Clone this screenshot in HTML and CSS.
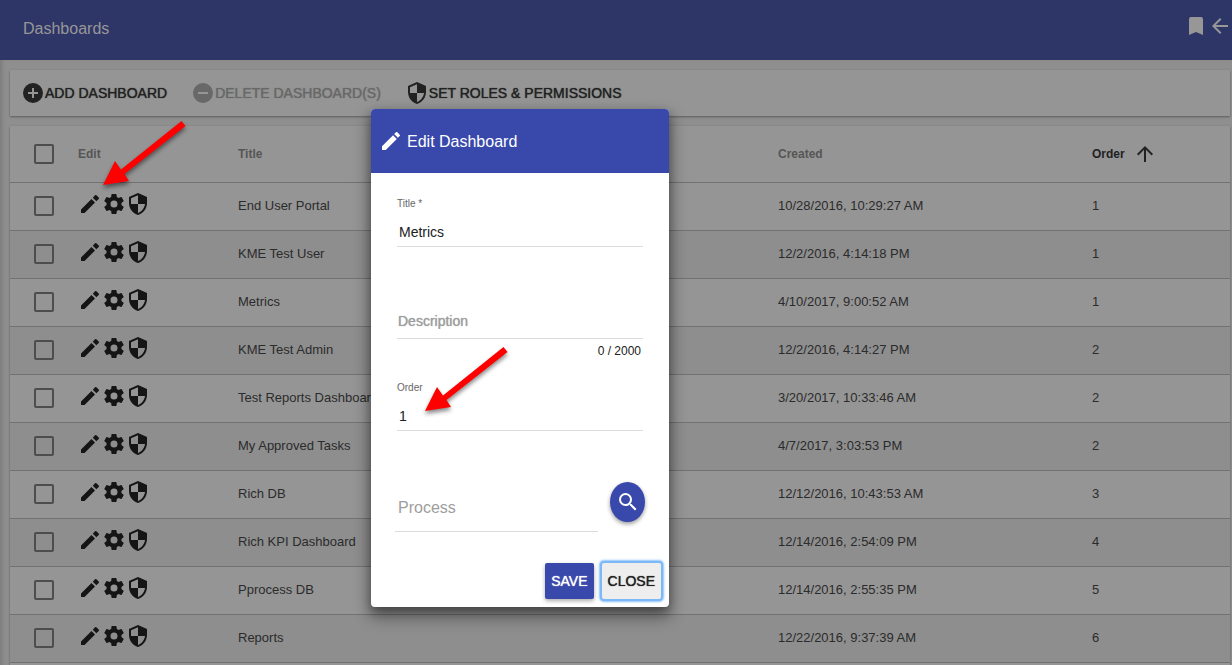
FILE: index.html
```html
<!DOCTYPE html>
<html lang="en">
<head>
<meta charset="utf-8">
<meta name="viewport" content="width=device-width, initial-scale=1">
<title>Dashboards</title>
<link rel="stylesheet" href="styles.css">
</head>
<body>
<svg class="sprite" aria-hidden="true">
  <symbol id="pencil" viewBox="0 0 24 24"><path d="M3 17.25V21h3.75L17.81 9.94l-3.75-3.75L3 17.25zM20.71 7.04a1 1 0 0 0 0-1.41l-2.34-2.34a1 1 0 0 0-1.41 0l-1.83 1.83 3.75 3.75 1.83-1.83z"/></symbol>
  <symbol id="pencil-thin" viewBox="0 0 24 24"><path d="M3 17.500V21h3.500L17 10.500 13.500 7zM14.800 5.700l3.500 3.500 2.400-2.200a1 1 0 0 0 0-1.400l-2.300-2.300a1 1 0 0 0-1.400 0z"/></symbol>
  <symbol id="gear" viewBox="0 0 24 24"><path d="M19.43 12.98c.04-.32.07-.64.07-.98s-.03-.66-.07-.98l2.11-1.65c.19-.15.24-.42.12-.64l-2-3.46c-.12-.22-.39-.3-.61-.22l-2.49 1c-.52-.4-1.08-.73-1.69-.98l-.38-2.65A.49.49 0 0 0 14 2h-4c-.25 0-.46.18-.49.42l-.38 2.65c-.61.25-1.17.59-1.69.98l-2.49-1c-.23-.09-.49 0-.61.22l-2 3.46c-.13.22-.07.49.12.64l2.11 1.65c-.04.32-.07.65-.07.98s.03.66.07.98l-2.11 1.65c-.19.15-.24.42-.12.64l2 3.46c.12.22.39.3.61.22l2.49-1c.52.4 1.08.73 1.69.98l.38 2.65c.03.24.24.42.49.42h4c.25 0 .46-.18.49-.42l.38-2.65c.61-.25 1.17-.59 1.69-.98l2.49 1c.23.09.49 0 .61-.22l2-3.46c.12-.22.07-.49-.12-.64l-2.11-1.65zM12 15.5a3.5 3.5 0 1 1 0-7 3.5 3.5 0 0 1 0 7z"/></symbol>
  <symbol id="shield" viewBox="0 0 24 24"><path d="M12 12h7c-.53 4.11-3.28 7.78-7 8.92V12H5V6.3l7-3.11M12 1L3 5v6c0 5.55 3.84 10.73 9 12 5.16-1.27 9-6.45 9-12V5l-9-4z"/></symbol>
  <symbol id="arrow" viewBox="0 0 90 72"><path d="M2 65L14 41L20 49.500L80.500 1L84.500 6L23.500 54L28 61z"/></symbol>
</svg>

<header class="topbar">
  <h1 class="topbar-title">Dashboards</h1>
  <div class="topbar-actions">
    <button class="icon-button" aria-label="Bookmark"><svg class="icon" viewBox="0 0 24 24"><path d="M17 3H7a2 2 0 0 0-2 2v16l7-3 7 3V5a2 2 0 0 0-2-2z"/></svg></button>
    <button class="icon-button" aria-label="Back"><svg class="icon" viewBox="0 0 24 24"><path d="M20 11H7.830l5.590-5.590L12 4l-8 8 8 8 1.410-1.410L7.830 13H20v-2z"/></svg></button>
  </div>
</header>

<main class="content">
  <div class="card toolbar">
    <button class="tool"><svg class="icon" viewBox="0 0 24 24"><path d="M12 2a10 10 0 1 0 0 20 10 10 0 0 0 0-20zm5 11h-4v4h-2v-4H7v-2h4V7h2v4h4v2z"/></svg><span>ADD DASHBOARD</span></button>
    <button class="tool" disabled><svg class="icon" viewBox="0 0 24 24"><path d="M12 2a10 10 0 1 0 0 20 10 10 0 0 0 0-20zm5 11H7v-2h10v2z"/></svg><span>DELETE DASHBOARD(S)</span></button>
    <button class="tool"><svg class="icon"><use href="#shield"/></svg><span>SET ROLES &amp; PERMISSIONS</span></button>
  </div>

  <div class="card">
    <table class="grid">
      <colgroup><col class="col-check"><col class="col-edit"><col class="col-title"><col class="col-created"><col></colgroup>
      <thead>
        <tr>
          <th class="check-cell"><input class="check" type="checkbox" aria-label="Select all"></th>
          <th>Edit</th><th>Title</th><th>Created</th>
          <th class="sorted"><span class="sort">Order<svg class="icon" viewBox="0 0 24 24"><path d="M4 12l1.410 1.410L11 7.830V20h2V7.830l5.580 5.590L20 12l-8-8-8 8z"/></svg></span></th>
        </tr>
      </thead>
      <tbody id="rows"></tbody>
    </table>
  </div>
</main>

<section class="dialog" role="dialog" aria-labelledby="dialog-title">
  <div class="dialog-head">
    <svg class="icon"><use href="#pencil"/></svg>
    <h2 class="dialog-title" id="dialog-title">Edit Dashboard</h2>
  </div>
  <form class="dialog-body">
    <div class="field">
      <label class="label" for="title">Title *</label>
      <input class="input" id="title" type="text" value="Metrics">
    </div>
    <div class="field field-description">
      <input class="input input-strong" id="description" type="text" placeholder="Description" aria-label="Description">
      <span class="count">0 / 2000</span>
    </div>
    <div class="field">
      <label class="label" for="order">Order</label>
      <input class="input" id="order" type="text" value="1">
    </div>
    <div class="process">
      <input class="input input-large" type="text" placeholder="Process" aria-label="Process">
      <button class="search" type="button" aria-label="Search"><svg class="icon" viewBox="0 0 24 24"><path d="M15.500 14h-.790l-.280-.270A6.470 6.470 0 0 0 16 9.500 6.500 6.500 0 1 0 9.500 16c1.610 0 3.090-.590 4.230-1.570l.270.280v.790l5 4.990L20.490 19l-4.990-5zm-6 0a4.500 4.500 0 1 1 0-9 4.500 4.500 0 0 1 0 9z"/></svg></button>
    </div>
  </form>
  <div class="dialog-actions">
    <button class="button button-primary">SAVE</button>
    <button class="button button-focused">CLOSE</button>
  </div>
</section>

<svg class="arrow arrow-edit" aria-hidden="true"><use href="#arrow"/></svg>
<svg class="arrow arrow-order" aria-hidden="true"><use href="#arrow"/></svg>
<script src="app.js"></script>
</body>
</html>
```
FILE: app.js
```js
const dashboards = [
  ["End User Portal", "10/28/2016, 10:29:27 AM", 1],
  ["KME Test User", "12/2/2016, 4:14:18 PM", 1],
  ["Metrics", "4/10/2017, 9:00:52 AM", 1],
  ["KME Test Admin", "12/2/2016, 4:14:27 PM", 2],
  ["Test Reports Dashboard", "3/20/2017, 10:33:46 AM", 2],
  ["My Approved Tasks", "4/7/2017, 3:03:53 PM", 2],
  ["Rich DB", "12/12/2016, 10:43:53 AM", 3],
  ["Rich KPI Dashboard", "12/14/2016, 2:54:09 PM", 4],
  ["Pprocess DB", "12/14/2016, 2:55:35 PM", 5],
  ["Reports", "12/22/2016, 9:37:39 AM", 6]
];

const action = (icon, label) =>
  `<button class="icon-button" aria-label="${label}"><svg class="icon"><use href="#${icon}"/></svg></button>`;

document.getElementById("rows").innerHTML = dashboards.map(([title, created, order]) => `
  <tr>
    <td class="check-cell"><input class="check" type="checkbox" aria-label="Select ${title}"></td>
    <td><div class="actions">${action("pencil-thin", "Edit")}${action("gear", "Settings")}${action("shield", "Permissions")}</div></td>
    <td>${title}</td>
    <td>${created}</td>
    <td>${order}</td>
  </tr>`).join("");
```
FILE: styles.css
```css
* {
  box-sizing: border-box;
}

body {
  margin: 0;
  min-height: 100vh;
  background: #8f8f8f;
  color: #2b2b2b;
  font-family: "Liberation Sans", Arial, sans-serif;
  font-size: 13px;
  overflow: hidden;
}

button,
input {
  margin: 0;
  padding: 0;
  border: 0;
  background: none;
  color: inherit;
  font: inherit;
}

.sprite {
  display: none;
}

.icon {
  display: block;
  flex: none;
  width: 24px;
  height: 24px;
  fill: currentColor;
}

.icon-button {
  display: block;
}

.topbar {
  display: flex;
  align-items: center;
  justify-content: space-between;
  height: 60px;
  padding: 0 0 4px 23px;
  background: #2e3567;
  color: #979797;
}

.topbar-title {
  margin: 0;
  padding-top: 2px;
  font-size: 16px;
  font-weight: 400;
}

.topbar-actions {
  display: flex;
  padding-bottom: 4px;
}

.content {
  display: flex;
  flex-direction: column;
  gap: 10px;
  padding: 10px 2px 3px 10px;
  box-shadow: inset 4px 0 4px -2px #7a7a7a;
}

.card {
  background: #959595;
  box-shadow: 0 1px 2px #5c5c5c;
}

.toolbar {
  display: flex;
  align-items: center;
  gap: 24px;
  height: 46px;
  padding-left: 11px;
}

.tool {
  display: flex;
  align-items: center;
  height: 24px;
  color: #222;
  font-size: 14px;
  text-shadow: 0 0 1px currentColor;
  white-space: nowrap;
}

.tool:disabled {
  color: #686868;
}

.grid {
  width: 100%;
  padding-bottom: 3px;
  border-collapse: separate;
  border-spacing: 0;
  table-layout: fixed;
}

.col-check {
  width: 68px;
}

.col-edit {
  width: 160px;
}

.col-title {
  width: 540px;
}

.col-created {
  width: 314px;
}

.grid th,
.grid td {
  height: 48px;
  padding: 0;
  border-bottom: 1px solid #727272;
  text-align: left;
}

.grid td {
  padding-bottom: 2px;
}

.grid th {
  height: 57px;
  color: #565656;
  font-size: 12px;
  font-weight: 700;
}

.grid tbody tr:nth-child(even) {
  background: #8e8e8e;
}

.grid .check-cell {
  padding-left: 24px;
}

.grid .sorted {
  color: #222;
}

.sort {
  display: flex;
  align-items: center;
  gap: 8px;
}

.check {
  display: block;
  width: 20px;
  height: 20px;
  border: 2px solid #4d4d4d;
  border-radius: 2px;
  appearance: none;
}

.actions {
  display: flex;
  padding-bottom: 4px;
  color: #151515;
}

.dialog {
  position: absolute;
  top: 109px;
  left: 371px;
  width: 298px;
  border-radius: 4px;
  background: #fff;
  box-shadow: 0 8px 16px 2px #0006, 0 4px 8px #0004;
}

.dialog-head {
  display: flex;
  align-items: center;
  gap: 4px;
  height: 64px;
  padding-left: 8px;
  border-radius: 4px 4px 0 0;
  background: #3949ab;
  color: #fff;
}

.dialog-title {
  margin: 0;
  padding-top: 2px;
  font-size: 16px;
  font-weight: 400;
}

.dialog-body {
  padding: 24px 26px 0;
}

.field {
  display: flex;
  flex-direction: column;
}

.field-description {
  padding: 56px 0 22px;
}

.label {
  color: #666;
  font-size: 10px;
  line-height: 14px;
}

.input {
  width: 100%;
  min-width: 0;
  height: 36px;
  padding: 6px 2px 0;
  border-bottom: 1px solid #dcdcdc;
  border-radius: 0;
  color: #212121;
  font-size: 14px;
}

.input::placeholder {
  color: #9e9e9e;
  opacity: 1;
}

.input-strong {
  padding: 0 1px;
}

.input-strong::placeholder {
  text-shadow: 0 0 1px #9e9e9e;
}

.count {
  align-self: flex-end;
  padding: 4px 2px 0;
  color: #212121;
  font-size: 12px;
  line-height: 16px;
}

.process {
  display: flex;
  gap: 12px;
  margin: 51px -2px 0;
}

.input-large {
  flex: 1;
  height: 50px;
  padding: 2px 3px 0;
  font-size: 16px;
}

.search {
  display: flex;
  align-items: center;
  justify-content: center;
  width: 35px;
  height: 40px;
  border-radius: 50%;
  background: #3949ab;
  box-shadow: 0 2px 4px #0006;
  color: #fff;
}

.dialog-actions {
  display: flex;
  justify-content: flex-end;
  gap: 8px;
  padding: 31px 8px 8px;
}

.button {
  height: 36px;
  padding: 0 6px;
  border-radius: 2px;
  color: #212121;
  font-size: 14px;
  text-shadow: 0 0 1px currentColor;
}

.button-primary {
  background: #3949ab;
  box-shadow: 0 2px 4px #0005;
  color: #fff;
}

.button-focused {
  background: #eee;
  box-shadow: 0 0 0 2px #7db9f7, 0 0 2px 3px #8fc3fa;
}

.arrow {
  position: absolute;
  width: 90px;
  height: 72px;
  fill: #f00;
  filter: drop-shadow(0 3px 2px #0007);
  pointer-events: none;
}

.arrow-edit {
  top: 120px;
  left: 101px;
}

.arrow-order {
  top: 346px;
  left: 423px;
}
```
